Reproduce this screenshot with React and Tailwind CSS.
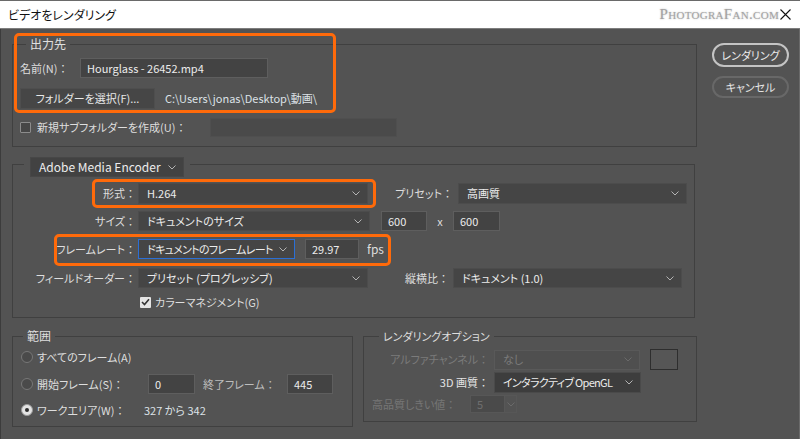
import React from "react";

const C = () => <span className="[font-feature-settings:normal]">：</span>;

const Chevron = ({ className = "" }) => (
  <svg width="8" height="5" viewBox="0 0 8 5" className={className}>
    <path d="M0.5 0.5 L4 4 L7.5 0.5" fill="none" stroke="currentColor" strokeWidth="1" />
  </svg>
);

const Select = ({ w, children, focused = false, disabled = false, dark = false, h = "h-[21px]", tight = false }) => (
  <div
    className={`${w} ${h} flex items-center justify-between pl-[8px] pr-[7px] border ${
      focused
        ? "border-[#2b6fd6] bg-[#454545] text-[#ececec]"
        : disabled
        ? "border-[#595959] bg-[#4f4f4f] text-[#7b7b7b]"
        : dark
        ? "border-[#4a4a4a] bg-[#3d3d3d] text-[#ececec]"
        : "border-[#4c4c4c] bg-[#454545] text-[#ececec]"
    }`}
  >
    <span className={`whitespace-nowrap ${tight ? "tracking-[-0.7px]" : ""}`}>{children}</span>
    <Chevron className={disabled ? "text-[#6a6a6a]" : "text-[#b4b4b4]"} />
  </div>
);

const Input = ({ w, h = "h-[20px]", children, disabled = false }) => (
  <div
    className={`${w} ${h} flex items-center pl-[6px] border ${
      disabled ? "border-[#4a4a4a] bg-[#4a4a4a] text-[#777]" : "border-[#5e5e5e] bg-[#434343] text-[#ececec]"
    }`}
  >
    {children}
  </div>
);

const Radio = ({ checked }) =>
  checked ? (
    <div className="w-[12px] h-[12px] rounded-full bg-[#e4e4e4] border border-[#9a9a9a] flex items-center justify-center shrink-0">
      <div className="w-[4px] h-[4px] rounded-full bg-[#2e2e2e]" />
    </div>
  ) : (
    <div className="w-[12px] h-[12px] rounded-full bg-[#4a4a4a] border border-[#777] shrink-0" />
  );

const Checkbox = ({ checked }) =>
  checked ? (
    <div className="w-[11px] h-[11px] rounded-[1px] bg-[#e4e4e4] flex items-center justify-center shrink-0">
      <svg width="9" height="8" viewBox="0 0 9 8">
        <path d="M1 4 L3.5 6.5 L8 1.2" fill="none" stroke="#333" strokeWidth="1.6" />
      </svg>
    </div>
  ) : (
    <div className="w-[11px] h-[11px] rounded-[1px] bg-[#474747] border border-[#8c8c8c] shrink-0" />
  );

export default function App() {
  return (
    <div
      className="w-[800px] h-[439px] bg-[#535353] relative overflow-hidden flex flex-col text-[11px] leading-none text-[#dedede] [font-feature-settings:'palt']"
      style={{ fontFamily: '"Noto Sans CJK JP", "Noto Sans", sans-serif' }}
    >
      {/* Title bar */}
      <div className="h-[29px] shrink-0 bg-white border-t border-t-[#6a6a6a] border-b border-b-[#7d7d7d] flex items-center justify-between pl-[8px] pr-[9px]">
        <span className="text-[#111] text-[12px]">ビデオをレンダリング</span>
        <div className="flex items-center">
          <span
            className="text-[#a3a3a3] text-[15px] [font-variant:small-caps] tracking-[0.3px] [text-shadow:0_0_2px_rgba(0,0,0,0.25)]"
            style={{ fontFamily: '"Liberation Serif", serif' }}
          >
            PhotograFan.com
          </span>
          <svg width="11" height="11" viewBox="0 0 11 11" className="ml-[1px]">
            <path d="M0.5 0.5 L10.5 10.5 M10.5 0.5 L0.5 10.5" stroke="#111" strokeWidth="1.1" />
          </svg>
        </div>
      </div>

      {/* Body */}
      <div className="flex flex-1 border-l border-l-[#3c3c3c] border-r border-r-[#6a6a6a]">
        <div className="flex flex-col pl-[11px] w-[696px] shrink-0">
          {/* 出力先 */}
          <fieldset className="mt-[7px] w-[685px] border border-[#404040] p-0 m-0">
            <legend className="ml-[13px] px-[4px] leading-[16px] text-[12px] text-[#e0e0e0]">出力先</legend>
            <div className="pl-[7px] pt-[6px] pb-[9px] flex flex-col">
              <div className="flex items-center h-[20px]">
                <span className="w-[60px] whitespace-nowrap">名前(N)<C /></span>
                <Input w="w-[188px]">Hourglass - 26452.mp4</Input>
              </div>
              <div className="flex items-center h-[21px] mt-[10px]">
                <div className="w-[135px] h-[21px] bg-[#464646] border border-[#4e4e4e] flex items-center justify-center text-[#e8e8e8]">
                  フォルダーを選択(F)...
                </div>
                <span className="ml-[10px] text-[#dde2e7]">C:\Users\jonas\Desktop\動画\</span>
              </div>
              <div className="flex items-center h-[19px] mt-[9px]">
                <Checkbox />
                <span className="ml-[6px] w-[173px] whitespace-nowrap">新規サブフォルダーを作成(U)<C /></span>
                <div className="w-[187px] h-[19px] bg-[#4a4a4a] border border-[#4f4f4f]" />
              </div>
            </div>
          </fieldset>

          {/* Adobe Media Encoder group */}
          <fieldset className="mt-[4px] w-[683px] border border-[#404040] p-0 m-0">
            <legend className="ml-[11px] px-[6px] pt-[6px]">
              <div className="w-[154px] h-[20px] bg-[#424242] border border-[#474747] flex items-center justify-between pl-[8px] pr-[7px] text-[#ececec] text-[12px]">
                <span>Adobe Media Encoder</span>
                <Chevron className="text-[#b4b4b4]" />
              </div>
            </legend>
            <div className="pt-[6px] pb-[9px] flex flex-col">
              <div className="flex items-center h-[21px]">
                <span className="w-[125px] text-right pr-[2px] whitespace-nowrap">形式<C /></span>
                <Select w="w-[230px]">H.264</Select>
                <span className="w-[90px] text-right pr-[5px] whitespace-nowrap">プリセット<C /></span>
                <Select w="w-[229px]">高画質</Select>
              </div>
              <div className="flex items-center h-[20px] mt-[7px]">
                <span className="w-[125px] text-right pr-[2px] whitespace-nowrap">サイズ<C /></span>
                <Select w="w-[232px]" h="h-[20px]">ドキュメントのサイズ</Select>
                <div className="ml-[11px]">
                  <Input w="w-[46px]">600</Input>
                </div>
                <span className="w-[26px] text-center">x</span>
                <Input w="w-[47px]">600</Input>
              </div>
              <div className="flex items-center h-[20px] mt-[8px]">
                <span className="w-[125px] text-right pr-[2px] whitespace-nowrap">フレームレート<C /></span>
                <Select w="w-[157px]" h="h-[20px]" focused tight>
                  ドキュメントのフレームレート
                </Select>
                <div className="ml-[10px]">
                  <Input w="w-[54px]">29.97</Input>
                </div>
                <span className="ml-[8px] text-[12px]">fps</span>
              </div>
              <div className="flex items-center h-[20px] mt-[9px]">
                <span className="w-[125px] text-right pr-[2px] whitespace-nowrap">フィールドオーダー<C /></span>
                <Select w="w-[230px]" h="h-[20px]">プリセット (プログレッシブ)</Select>
                <span className="w-[85px] text-right pr-[4px] whitespace-nowrap">縦横比<C /></span>
                <Select w="w-[229px]" h="h-[20px]">ドキュメント (1.0)</Select>
              </div>
              <div className="flex items-center h-[12px] mt-[8px] pl-[127px]">
                <Checkbox checked />
                <span className="ml-[4px]">カラーマネジメント(G)</span>
              </div>
            </div>
          </fieldset>

          {/* Bottom groups */}
          <div className="flex mt-[10px]">
            <fieldset className="w-[341px] border border-[#404040] p-0 m-0">
              <legend className="ml-[10px] px-[4px] leading-[16px] text-[12px]">範囲</legend>
              <div className="pl-[8px] pt-[3px] pb-[6px] flex flex-col">
                <div className="flex items-center h-[20px]">
                  <Radio />
                  <span className="ml-[4px]">すべてのフレーム(A)</span>
                </div>
                <div className="flex items-center h-[20px] mt-[7px]">
                  <Radio />
                  <span className="ml-[4px] w-[111px] whitespace-nowrap">開始フレーム(S)<C /></span>
                  <Input w="w-[47px]">0</Input>
                  <span className="ml-[8px] w-[84px] text-[#bdbdbd] whitespace-nowrap">終了フレーム<C /></span>
                  <Input w="w-[46px]">445</Input>
                </div>
                <div className="flex items-center h-[20px] mt-[6px]">
                  <Radio checked />
                  <span className="ml-[4px] w-[107px] whitespace-nowrap">ワークエリア(W)<C /></span>
                  <span className="text-[#dde2e7]">327 から 342</span>
                </div>
              </div>
            </fieldset>

            <fieldset className="ml-[10px] w-[334px] h-[94px] border border-[#404040] p-0 m-0">
              <legend className="ml-[15px] px-[4px] leading-[16px]">レンダリングオプション</legend>
              <div className="pt-[5px] flex flex-col">
                <div className="flex items-center h-[21px]">
                  <span className="w-[130px] text-right pr-[5px] text-[#7b7b7b] whitespace-nowrap">アルファチャンネル<C /></span>
                  <Select w="w-[146px]" h="h-[20px]" disabled>なし</Select>
                  <div className="ml-[10px] w-[28px] h-[21px] border border-[#2e2e2e] bg-[#565656]" />
                </div>
                <div className="flex items-center h-[21px] mt-[2px]">
                  <span className="w-[130px] text-right pr-[5px] text-[#e4e4e4] whitespace-nowrap">3D 画質<C /></span>
                  <Select w="w-[147px]" dark tight>インタラクティブ OpenGL</Select>
                </div>
                <div className="flex items-center h-[18px] mt-[2px] pl-[8px]">
                  <span className="w-[98px] text-[#767676] whitespace-nowrap">高品質しきい値<C /></span>
                  <div className="w-[35px] h-[18px] bg-[#4a4a4a] border border-[#575757] text-[#6f6f6f] flex items-center pl-[6px]">5</div>
                  <div className="w-[12px] h-[18px] border border-[#575757] border-l-0 flex items-center justify-center">
                    <Chevron className="text-[#6a6a6a]" />
                  </div>
                </div>
              </div>
            </fieldset>
          </div>
        </div>

        {/* Right buttons */}
        <div className="flex flex-col ml-[15px] pt-[14px]">
          <div className="w-[77px] h-[24px] rounded-full border-2 border-[#c4c4c4] flex items-center justify-center text-[#ececec]">
            レンダリング
          </div>
          <div className="w-[77px] h-[22px] mt-[9px] rounded-full border-2 border-[#686868] flex items-center justify-center text-[#e4e4e4]">
            キャンセル
          </div>
        </div>
      </div>

      {/* Orange highlight overlays */}
      <div className="absolute left-[14px] top-[33px] w-[322px] h-[80px] border-[3px] border-[#ff6a0a] rounded-[5px] pointer-events-none" />
      <div className="absolute left-[92px] top-[179px] w-[284px] h-[29px] border-[3px] border-[#ff6a0a] rounded-[5px] pointer-events-none" />
      <div className="absolute left-[54px] top-[234px] w-[337px] h-[32px] border-[3px] border-[#ff6a0a] rounded-[5px] pointer-events-none" />
    </div>
  );
}
